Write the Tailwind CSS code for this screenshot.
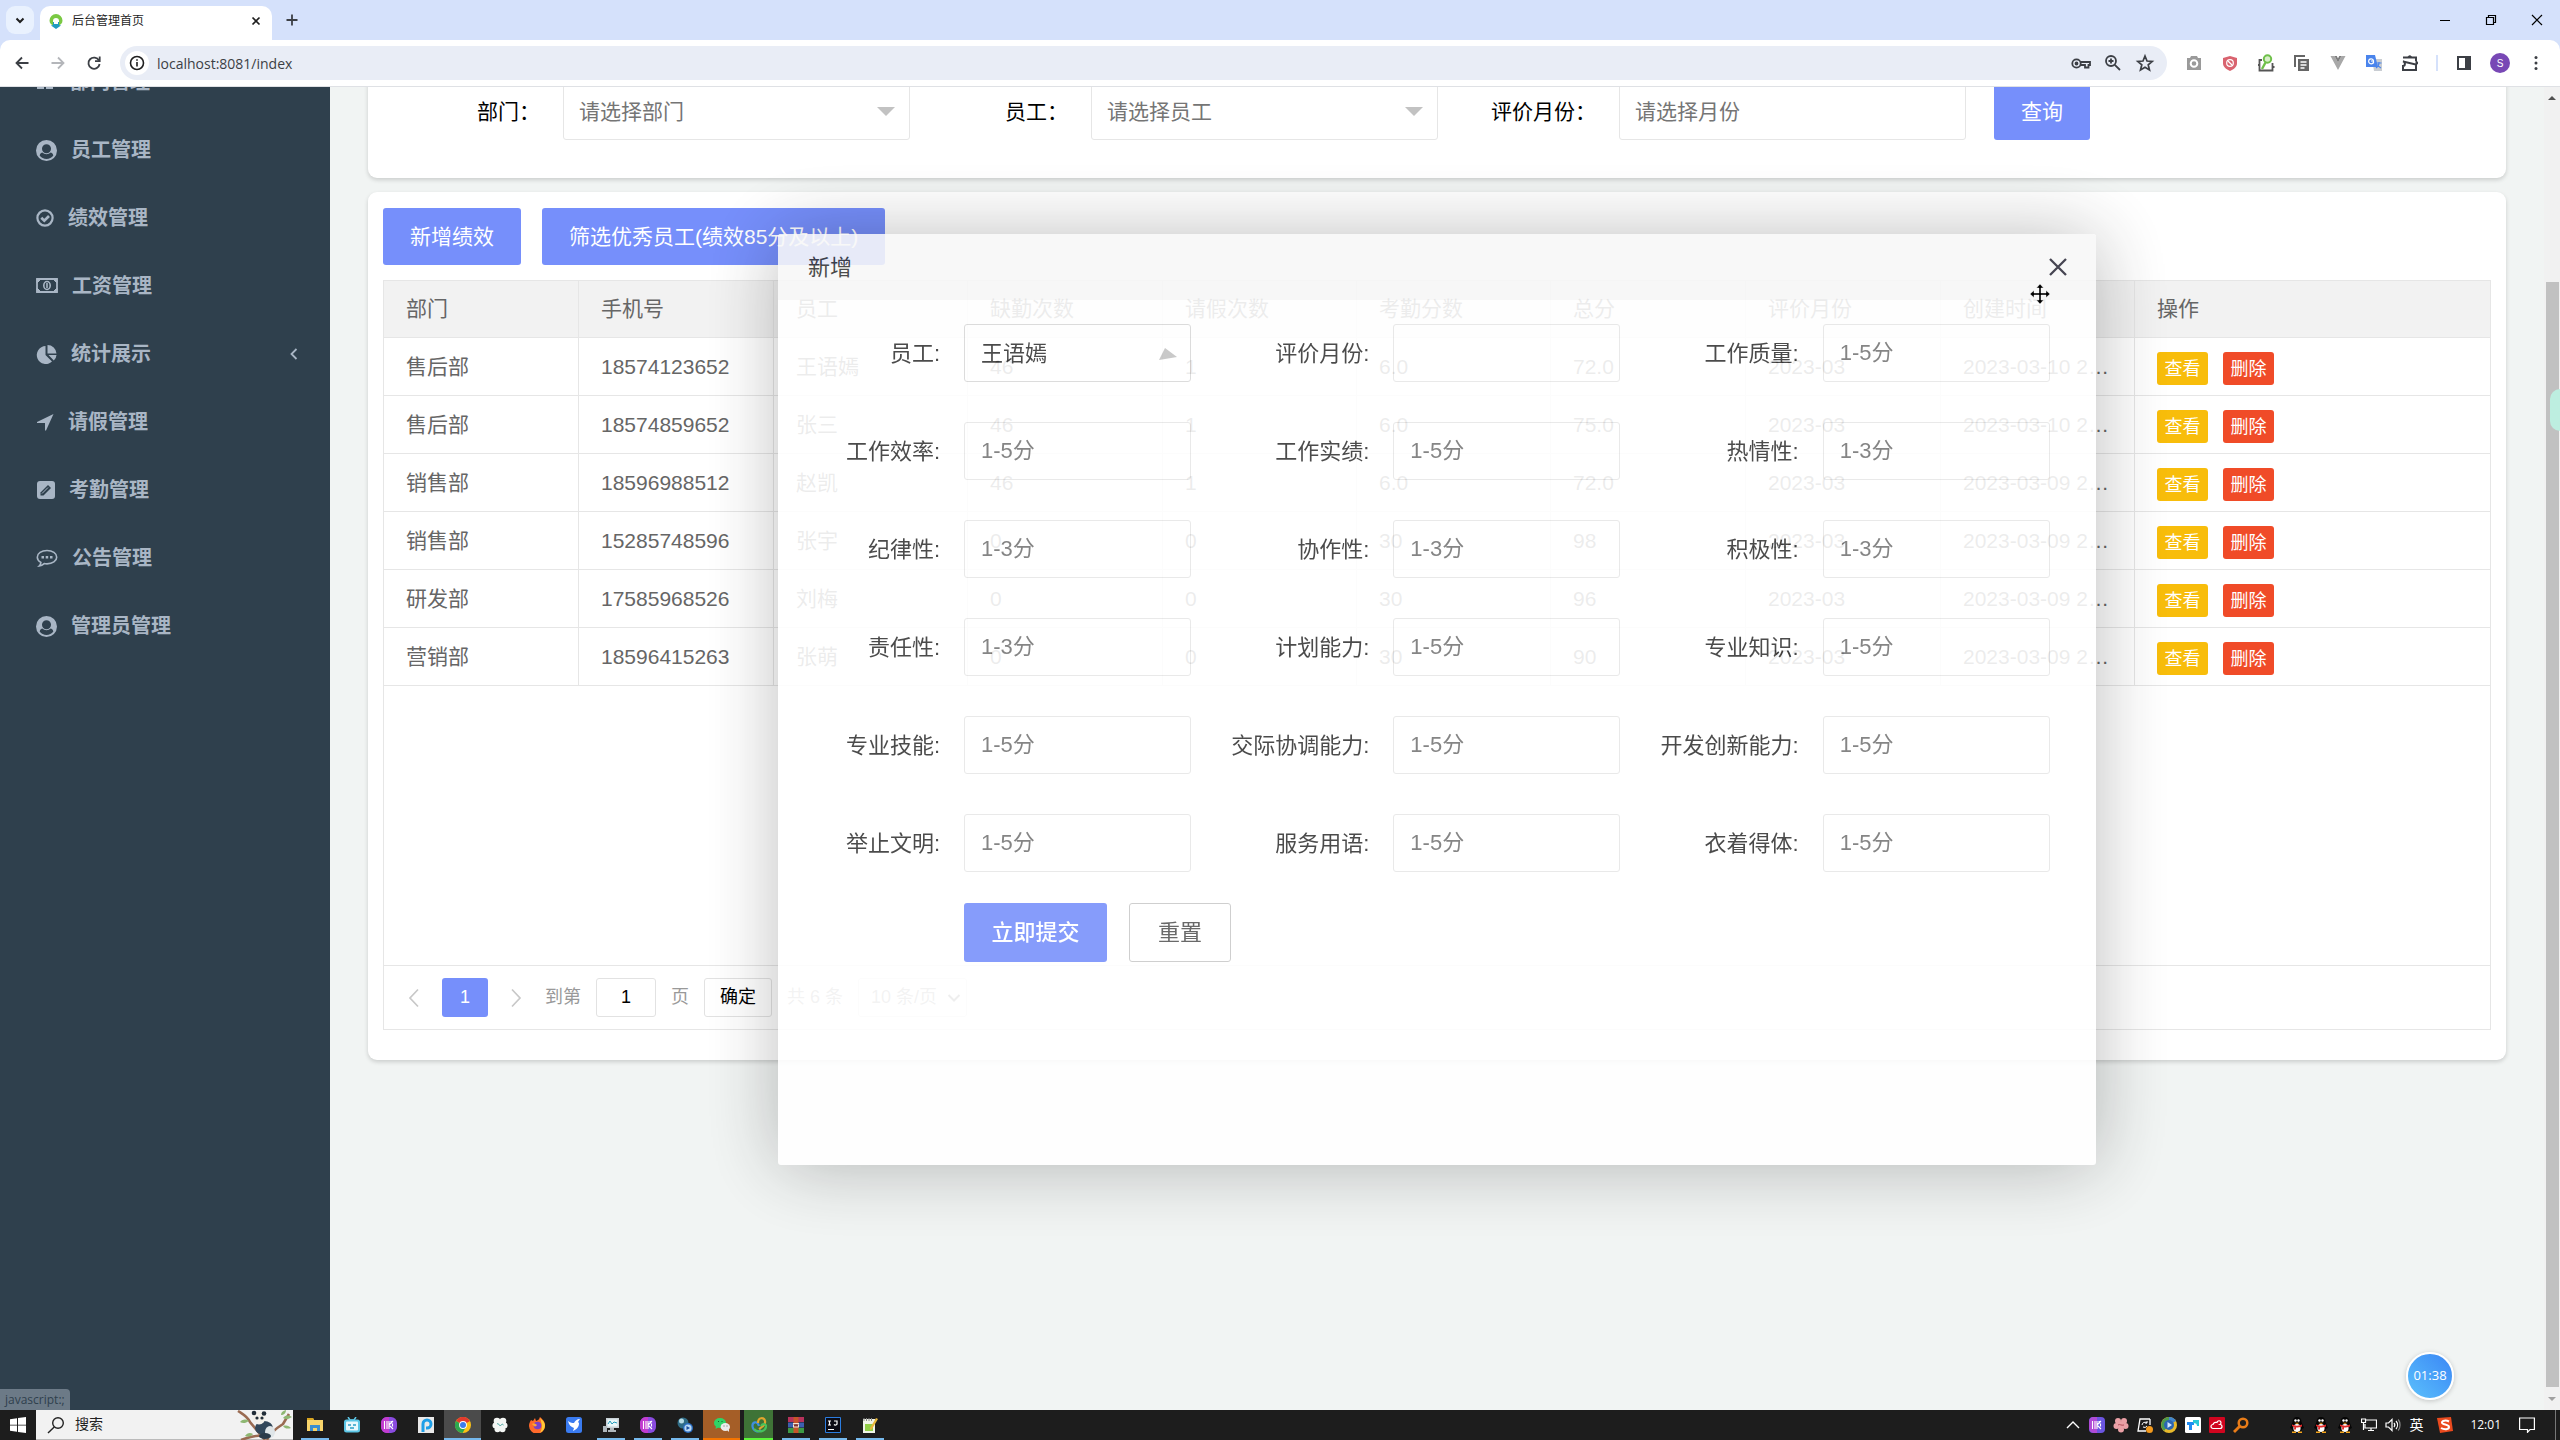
<!DOCTYPE html>
<html lang="zh-CN">
<head>
<meta charset="utf-8">
<title>后台管理首页</title>
<script src="https://cdn.jsdelivr.net/npm/@tailwindcss/browser@4"></script>
</head>
<body class="flex h-screen flex-col overflow-hidden bg-[#f1f4f3] font-['Liberation_Sans','Noto_Sans_CJK_SC',sans-serif] text-[21px] text-[#666]">

<!-- Browser chrome -->
<header class="shrink-0 bg-[#d5e1fb]">
  <div class="flex h-10 items-end pl-[6px]">
    <button class="mb-[6px] flex h-7 w-7 items-center justify-center rounded-[9px] bg-[#e9f1fe]" aria-label="搜索标签页">
      <svg class="h-3 w-3" viewBox="0 0 12 12" fill="none" stroke="#1f1f1f" stroke-width="2"><path d="M2.500 4.500 6 8l3.500-3.500"/></svg>
    </button>
    <div class="ml-[6px] flex h-[34px] w-[232px] items-center rounded-t-[10px] bg-white pr-[10px] pl-2 text-[12px] text-[#1f1f1f]">
      <svg class="mb-1 h-4 w-4 shrink-0" viewBox="0 0 16 16"><path d="M8 1a6.500 6.500 0 0 1 6.500 6.500c0 3-2 4-3.500 5V8a3 3 0 0 0-6 0v4.500c-1.500-1-3.500-2-3.500-5A6.500 6.500 0 0 1 8 1z" fill="#7ac943"/><path d="M5 9h6v3l2 .5L8 16l-5-3.500 2-.5z" fill="#1f9bc0"/><path d="M6 8h4v3H6z" fill="#fff"/></svg>
      <span class="mb-1 ml-2 grow">后台管理首页</span>
      <button class="mb-1" aria-label="关闭标签页"><svg class="h-3 w-3" viewBox="0 0 12 12" stroke="#1f1f1f" stroke-width="1.700"><path d="M2.500 2.500l7 7M9.500 2.500l-7 7"/></svg></button>
    </div>
    <button class="mb-[13px] ml-[13px]" aria-label="新标签页"><svg class="h-[14px] w-[14px]" viewBox="0 0 14 14" stroke="#3c3f45" stroke-width="1.800"><path d="M7 1.500v11M1.500 7h11"/></svg></button>
    <div class="mr-4 mb-[13px] ml-auto flex gap-8">
      <button aria-label="最小化"><svg class="h-[14px] w-[14px]" viewBox="0 0 14 14" stroke="#000" stroke-width="1"><path d="M2 7.500h10"/></svg></button>
      <button aria-label="还原"><svg class="h-[14px] w-[14px]" viewBox="0 0 14 14" fill="none" stroke="#000" stroke-width="1.200"><path d="M2.500 4.500h7v7h-7zM4.500 4.500v-2h7v7h-2"/></svg></button>
      <button aria-label="关闭"><svg class="h-[14px] w-[14px]" viewBox="0 0 14 14" stroke="#000" stroke-width="1.200"><path d="M2 2l10 10M12 2L2 12"/></svg></button>
    </div>
  </div>
  <div class="flex h-[47px] items-center rounded-t-[10px] border-b border-[#dfe1e5] bg-white pr-[14px] pl-[14px] text-[#3c3f45]">
    <div class="flex gap-5">
      <button aria-label="后退"><svg class="h-4 w-4" viewBox="0 0 16 16" fill="none" stroke="#3c3f45" stroke-width="1.800"><path d="M14.500 8H2.500M8 2.500 2.500 8 8 13.500"/></svg></button>
      <button aria-label="前进"><svg class="h-4 w-4" viewBox="0 0 16 16" fill="none" stroke="#b4b6ba" stroke-width="1.800"><path d="M1.500 8h12M8 2.500 13.500 8 8 13.500"/></svg></button>
      <button aria-label="重新加载"><svg class="h-4 w-4" viewBox="0 0 16 16" fill="none" stroke="#3c3f45" stroke-width="1.800"><path d="M13 5.500A5.600 5.600 0 1 0 13.600 9"/><path d="M13.700 1.500v4.700H9"/></svg></button>
    </div>
    <div class="ml-[18px] flex h-[34px] grow items-center rounded-full bg-[#e9edf6] pr-3 pl-[5px]">
      <span class="flex h-6 w-6 items-center justify-center rounded-full bg-white"><svg class="h-4 w-4" viewBox="0 0 16 16" fill="none" stroke="#1f1f1f" stroke-width="1.600"><circle cx="8" cy="8" r="6.500"/><path d="M8 7v4.500M8 4.200v1.600"/></svg></span>
      <input aria-label="地址" class="ml-2 grow bg-transparent font-['Open_Sans',sans-serif] text-[14px] text-[#3c3f45] outline-none" value="localhost:8081/index">
      <div class="flex gap-3">
        <svg class="h-5 w-5" viewBox="0 0 20 20" fill="none" stroke="#3c3f45" stroke-width="1.800"><circle cx="5.500" cy="10.500" r="4.200"/><circle cx="5.500" cy="10.500" r="1" /><path d="M9.500 9h9.500v3h-1.500v2.500H14V12H9.500"/></svg>
        <svg class="h-5 w-5" viewBox="0 0 20 20" fill="none" stroke="#3c3f45" stroke-width="1.800"><circle cx="8" cy="8" r="5"/><path d="M11.800 11.800 17 17M8 5.500v5M5.500 8h5"/></svg>
        <svg class="h-5 w-5" viewBox="0 0 20 20" fill="none" stroke="#3c3f45" stroke-width="1.700"><path d="M10 3l2 5 5.200.4-4 3.400 1.300 5.200L10 14.200 5.500 17l1.300-5.200-4-3.400L8 8z"/></svg>
      </div>
    </div>
    <div class="ml-[17px] flex items-center gap-4">
      <svg class="h-5 w-5" viewBox="0 0 20 20"><path d="M3 5h3l1-2h6l1 2h3v12H3z" fill="#9a9a9a"/><circle cx="10" cy="10.500" r="3.300" fill="none" stroke="#fff" stroke-width="2"/></svg>
      <svg class="h-5 w-5" viewBox="0 0 20 20"><path d="M10 3l7 2v5c0 4-3 6-7 8-4-2-7-4-7-8V5z" fill="#d9636f"/><circle cx="10" cy="10" r="3.300" fill="none" stroke="#fff" stroke-width="1.200"/><path d="M8 8l4 4" stroke="#fff" stroke-width="1.200"/></svg>
      <svg class="h-5 w-5" viewBox="0 0 20 20" fill="none"><path d="M6 7H3.500v10.500h13V10M16.500 14h2M2 12h2" stroke="#555" stroke-width="1.800"/><circle cx="11.500" cy="6" r="3.700" fill="#d7efc8" stroke="#6fc04a" stroke-width="2"/><path d="M9.500 9.500 6 16" stroke="#6fc04a" stroke-width="2.400"/></svg>
      <svg class="h-5 w-5" viewBox="0 0 20 20"><path d="M3 14V3h10" fill="none" stroke="#666" stroke-width="2"/><path d="M6 6h11v12H6z" fill="#666"/><path d="M8.500 9h6M8.500 12h6M8.500 15h4" stroke="#fff" stroke-width="1.400"/></svg>
      <svg class="h-5 w-5" viewBox="0 0 20 20"><path d="M2.500 3h4L10 9.500 13.500 3h4L10 17z" fill="#a8a8a8"/><path d="M6.500 3h2.300L10 5.500 11.200 3h2.300L10 9.500z" fill="#7d7d7d"/></svg>
      <svg class="h-5 w-5" viewBox="0 0 20 20"><path d="M8 6h10v12h-8z" fill="#c9cdd2"/><path d="M2 2h9l3 12H2z" fill="#4a84ec"/><path d="M9.500 7.500A2.500 2.500 0 1 0 9 10h.5V8H7" fill="none" stroke="#fff" stroke-width="1.200"/><path d="M12.500 10h5M15 9v1c0 3-1.500 4-3 5M13.500 11.500c1 2 2 3 3.500 3.500" fill="none" stroke="#4a84ec" stroke-width="1.200"/></svg>
      <svg class="h-5 w-5" viewBox="0 0 20 20" fill="none" stroke="#3c3f45" stroke-width="2"><path d="M3 4.500h13V8.300M16 11.500V17H3v-4c2.500 0 2.500-4.500 0-4.500z"/><path d="M8 4.500a1.500 1.500 0 0 1 3.500 0zM16 8.300a1.500 1.500 0 0 1 0 3.300z" fill="#3c3f45" stroke-width="1"/></svg>
      <span class="h-4 w-[2px] bg-[#d5e1fb]"></span>
      <svg class="h-5 w-5" viewBox="0 0 20 20"><path d="M4 4h12v12H4z" fill="none" stroke="#3c3f45" stroke-width="2"/><path d="M11 4h5v12h-5z" fill="#3c3f45"/></svg>
      <span class="flex h-5 w-5 items-center justify-center rounded-full bg-[#7848b5] text-[10px] text-white">S</span>
      <button aria-label="菜单"><svg class="h-5 w-5" viewBox="0 0 20 20" fill="#3c3f45"><circle cx="10" cy="4.500" r="1.500"/><circle cx="10" cy="10" r="1.500"/><circle cx="10" cy="15.500" r="1.500"/></svg></button>
    </div>
  </div>
</header>

<div class="relative flex min-h-0 grow">
  <!-- Side menu -->
  <aside class="w-[330px] shrink-0 overflow-hidden bg-[#2f404d]">
    <nav class="-mt-[39px] text-[20px] font-bold text-[#a9b6c5]">
      <a href="#" class="flex h-[68px] items-center gap-[14px] px-9"><svg class="h-5 w-5" viewBox="0 0 20 20" fill="currentColor"><path d="M1 8h7v9H1zM10 8h7v9h-7z"/></svg>部门管理</a>
      <a href="#" class="flex h-[68px] items-center gap-[14px] px-9"><svg class="h-[21px] w-[21px]" viewBox="0 0 20 20" fill="currentColor"><path fill-rule="evenodd" d="M10 0a10 10 0 1 1 0 20 10 10 0 0 1 0-20zM3.500 14.700A8 8 0 0 0 16.500 14.700C16 12.500 14.800 11.800 14 11.800a5.500 5.500 0 0 1-8 0c-.8 0-2 .7-2.500 2.900zM10 4a4.300 4.300 0 1 0 0 8.600A4.300 4.300 0 0 0 10 4z"/></svg>员工管理</a>
      <a href="#" class="flex h-[68px] items-center gap-[14px] px-9"><svg class="h-[18px] w-[18px]" viewBox="0 0 18 18" fill="none" stroke="currentColor"><circle cx="9" cy="9" r="7.600" stroke-width="2.200"/><path d="M5.300 8.700 8.300 11.600 13 7" stroke-width="2.700"/></svg>绩效管理</a>
      <a href="#" class="flex h-[68px] items-center gap-[14px] px-9"><svg class="h-[22px] w-[22px]" viewBox="0 0 22 22" fill="none" stroke="currentColor"><path d="M1 4h20v13H1z" stroke-width="1.800"/><path d="M1 4h4L1 8zM21 4v4l-4-4zM1 17v-4l4 4zM21 17h-4l4-4z" fill="currentColor"/><ellipse cx="11" cy="10.500" rx="3.200" ry="4" stroke-width="1.600"/><path d="M11 8v5" stroke-width="1.600"/></svg>工资管理</a>
      <a href="#" class="flex h-[68px] items-center gap-[14px] px-9"><svg class="h-[21px] w-[21px]" viewBox="0 0 21 21" fill="currentColor"><path d="M9.500 2v9l6.500 6.500A9 9 0 1 1 9.500 2z"/><path d="M11.500 1a9 9 0 0 1 9 8.500h-9zM12.500 11h8a8 8 0 0 1-2.700 5.500z"/></svg><span class="grow">统计展示</span>
        <svg class="-mr-[6px] h-3 w-3" viewBox="0 0 12 12" fill="none" stroke="currentColor" stroke-width="1.800"><path d="M8.500 1 3.500 6l5 5"/></svg></a>
      <a href="#" class="flex h-[68px] items-center gap-[14px] px-9"><svg class="h-[18px] w-[18px]" viewBox="0 0 18 18" fill="currentColor"><path d="M17.500 1 10 17.500H9V10H1V9z"/></svg>请假管理</a>
      <a href="#" class="flex h-[68px] items-center gap-[14px] px-9"><svg class="h-[19px] w-[19px]" viewBox="0 0 19 19"><rect x="1" y="0" width="18" height="18" rx="3" fill="currentColor"/><path d="M4.500 14.500v-3l7.500-7.500 3 3-7.500 7.500z" fill="#2f404d"/><path d="M6 12.500l6-6" stroke="#a9b6c5"/></svg>考勤管理</a>
      <a href="#" class="flex h-[68px] items-center gap-[14px] px-9"><svg class="h-[22px] w-[22px]" viewBox="0 0 22 22" fill="none" stroke="currentColor"><path d="M11 3.500c5.500 0 9.700 3 9.700 6.700s-4.200 6.700-9.700 6.700c-1 0-2 0-2.800-.3-1.500 1.400-3.200 2.200-5 2.400 1-1 1.600-2 1.700-3.600C2.700 14.200 1.300 12.300 1.300 10.200 1.300 6.500 5.500 3.500 11 3.500z" stroke-width="1.600"/><path d="M5.500 10.200h2.500M9.700 10.200h2.500M14 10.200h2.500" stroke-width="2.500"/></svg>公告管理</a>
      <a href="#" class="flex h-[68px] items-center gap-[14px] px-9"><svg class="h-[21px] w-[21px]" viewBox="0 0 20 20" fill="currentColor"><path fill-rule="evenodd" d="M10 0a10 10 0 1 1 0 20 10 10 0 0 1 0-20zM3.500 14.700A8 8 0 0 0 16.500 14.700C16 12.500 14.800 11.800 14 11.800a5.500 5.500 0 0 1-8 0c-.8 0-2 .7-2.500 2.900zM10 4a4.300 4.300 0 1 0 0 8.600A4.300 4.300 0 0 0 10 4z"/></svg>管理员管理</a>
    </nav>
  </aside>

  <main class="relative min-w-0 grow overflow-hidden px-[38px]">
    <!-- Filter card -->
    <section class="-mt-8 rounded-[9px] bg-white pt-7 pb-[38px] pl-[14px] shadow-[0_2px_4px_rgba(0,0,0,0.16)]">
      <form class="flex h-[57px] items-center">
        <label for="f-dept" class="w-[181px] shrink-0 pr-[23px] text-right text-black">部门：</label>
        <div class="relative">
          <select id="f-dept" class="h-[57px] w-[347px] appearance-none rounded-[3px] border border-[#e6e6e6] bg-white px-[15px] text-[#757575]"><option>请选择部门</option></select>
          <span class="pointer-events-none absolute top-6 right-[15px] border-x-[9px] border-t-[9px] border-x-transparent border-t-[#c2c2c2]"></span>
        </div>
        <label for="f-emp" class="w-[181px] shrink-0 pr-[23px] text-right text-black">员工：</label>
        <div class="relative">
          <select id="f-emp" class="h-[57px] w-[347px] appearance-none rounded-[3px] border border-[#e6e6e6] bg-white px-[15px] text-[#757575]"><option>请选择员工</option></select>
          <span class="pointer-events-none absolute top-6 right-[15px] border-x-[9px] border-t-[9px] border-x-transparent border-t-[#c2c2c2]"></span>
        </div>
        <label for="f-month" class="w-[181px] shrink-0 pr-[23px] text-right text-black">评价月份：</label>
        <input id="f-month" placeholder="请选择月份" class="h-[57px] w-[347px] rounded-[3px] border border-[#e6e6e6] bg-white px-[15px] placeholder:text-[#757575]">
        <button type="button" class="ml-7 h-[57px] rounded-[3px] bg-[#768ffb] px-[27px] text-white">查询</button>
      </form>
    </section>

    <!-- Performance table card -->
    <section class="mt-[14px] rounded-[9px] bg-white px-[15px] pt-4 pb-[30px] shadow-[0_2px_4px_rgba(0,0,0,0.16)]">
      <div class="flex gap-[21px]">
        <button class="h-[57px] rounded-[3px] bg-[#768ffb] px-[27px] text-white">新增绩效</button>
        <button class="h-[57px] rounded-[3px] bg-[#768ffb] px-[27px] text-white">筛选优秀员工(绩效85分及以上)</button>
      </div>
      <div class="mt-[15px] border border-[#e6e6e6]">
        <table class="w-full table-fixed border-separate border-spacing-0 text-left">
          <colgroup><col class="w-[195px]"><col class="w-[195px]"><col class="w-[194px]"><col class="w-[195px]"><col class="w-[194px]"><col class="w-[194px]"><col class="w-[195px]"><col class="w-[195px]"><col class="w-[194px]"><col></colgroup>
          <thead id="head" class="bg-[#f2f2f2]"></thead>
          <tbody id="rows"></tbody>
        </table>
        <div class="h-[279px]"></div>
        <div class="flex h-16 items-center border-t border-[#e6e6e6] pl-[18px] text-[18px] text-[#999]">
          <button class="flex w-6 justify-center" aria-label="上一页"><svg class="h-5 w-5" viewBox="0 0 20 20" fill="none" stroke="#c8c8c8" stroke-width="1.700"><path d="M14 1.500 6 10l8 8.500"/></svg></button>
          <button class="mx-[16px] h-[39px] w-[46px] rounded-[3px] bg-[#768ffb] text-white">1</button>
          <button class="flex w-6 justify-center" aria-label="下一页"><svg class="h-5 w-5" viewBox="0 0 20 20" fill="none" stroke="#c8c8c8" stroke-width="1.700"><path d="M6 1.500 14 10l-8 8.500"/></svg></button>
          <label for="page" class="ml-[17px]">到第</label>
          <input id="page" value="1" class="mx-[15px] h-[39px] w-[60px] rounded-[3px] border border-[#e2e2e2] text-center text-black">页
          <button class="mr-[15px] ml-[15px] h-[39px] w-[68px] rounded-[3px] border border-[#e2e2e2] bg-white text-black">确定</button>共 6 条
          <div class="relative ml-[15px]">
            <select aria-label="每页条数" class="h-[39px] w-[109px] appearance-none rounded-[3px] border border-[#e2e2e2] bg-white pl-3 text-[#999]"><option>10 条/页</option></select>
            <svg class="pointer-events-none absolute top-[13px] right-[6px] h-[14px] w-[14px]" viewBox="0 0 14 14" fill="none" stroke="#777" stroke-width="2"><path d="M1.500 4 7 9.500 12.500 4"/></svg>
          </div>
        </div>
      </div>
    </section>
  </main>

  <!-- Page scroll bar -->
  <div class="flex w-4 shrink-0 flex-col items-center bg-[#f1f1f1] pt-[7px] pb-[7px]">
    <svg class="h-2 w-2 shrink-0" viewBox="0 0 8 8"><path d="M0 6 4 2l4 4z" fill="#505050"/></svg>
    <span class="mt-[180px] mb-2 w-[13px] grow bg-[#c1c1c1]"></span>
    <svg class="h-2 w-2 shrink-0" viewBox="0 0 8 8"><path d="M0 2h8L4 6z" fill="#a0a0a0"/></svg>
  </div>

  <!-- Add dialog, fading in over the page -->
  <div role="dialog" aria-label="新增" class="absolute top-[147px] right-4 left-[330px] mx-auto w-[1318px] rounded-[3px] bg-white text-[22px] text-[#333] opacity-[0.88] shadow-[1px_1px_75px_rgba(0,0,0,0.3)]">
    <div class="flex h-[66px] items-center justify-between rounded-t-[3px] bg-[#f8f8f8] pr-7 pl-[30px]">
      <h2>新增</h2>
      <button aria-label="关闭"><svg class="h-5 w-5" viewBox="0 0 20 20" stroke="#2d2c3b" stroke-width="2.300"><path d="M2 2l16 16M18 2 2 18"/></svg></button>
    </div>
    <form class="px-4 pt-6 pb-[203px]">
      <div id="fields" class="grid grid-cols-3 gap-x-[2px] gap-y-10"></div>
      <div class="mt-[31px] flex gap-[22px] pl-[170px]">
        <button type="button" class="h-[59px] w-[143px] rounded-[3px] bg-[#768ffb] font-medium text-white">立即提交</button>
        <button type="reset" class="h-[59px] w-[102px] rounded-[3px] border border-[#c9c9c9] bg-white text-[#555]">重置</button>
      </div>
    </form>
  </div>

  <svg class="absolute top-[197px] right-[510px] h-5 w-5" viewBox="0 0 20 20"><path d="M10 0l3.500 4H11v5h5V6.500l4 3.500-4 3.500V11h-5v5h2.500L10 20l-3.500-4H9v-5H4v2.500L0 10l4-3.500V9h5V4H6.500z" fill="#000" stroke="#fff" stroke-width=".4"/></svg>

  <!-- Floating widgets -->
  <div class="absolute right-0 top-[302px] h-[42px] w-[10px] rounded-l-full bg-[#bdeee0]"></div>
  <div class="absolute right-[106px] bottom-[10px] flex h-12 w-12 items-center justify-center rounded-full border-2 border-white bg-linear-to-tr from-[#5cc0fb] to-[#3c86f5] font-['Open_Sans',sans-serif] text-[13px] text-white shadow-[0_1px_5px_rgba(0,0,0,0.2)]">01:38</div>
  <div class="absolute bottom-0 left-0 rounded-tr-[4px] bg-[#6c7a87] px-[5px] font-['Open_Sans',sans-serif] text-[12px] leading-[21px] text-[#2f404d]">javascript:;</div>
</div>

<!-- Taskbar -->
<footer class="flex h-[30px] shrink-0 bg-[#1d1d1d] text-white">
  <button class="flex w-9 items-center justify-center" aria-label="开始"><svg class="h-4 w-4" viewBox="0 0 16 16" fill="#fff"><path d="M0 2.300 7 1.300v6.400H0zM8 1.100 16 0v7.700H8zM0 8.500h7v6.300l-7-1zM8 8.500h8V16l-8-1.100z"/></svg></button>
  <div class="flex w-[257px] items-center border-b border-[#bbb] bg-[#f2f2f2] pl-[11px]">
    <svg class="h-[18px] w-[18px]" viewBox="0 0 18 18" fill="none" stroke="#222" stroke-width="1.400"><circle cx="11" cy="7" r="5.300"/><path d="M7.200 11 1 17"/></svg>
    <input aria-label="搜索" placeholder="搜索" class="ml-[10px] w-[120px] grow bg-transparent text-[14px] placeholder:text-[#222]">
    <svg class="h-[30px] w-14" viewBox="0 0 56 30"><path d="M1 1c6 4 9 5 12 11l15 18M30 30c3-7 8-11 16-16l6-10M4 30c8-3 14-5 20-4" fill="none" stroke="#9a6b52" stroke-width="2.600"/><path d="M3 12c3-3 6-3 9-1-3 2-6 3-9 1zM8 26c2-3 5-4 8-2-2 3-5 3-8 2zM46 8c3-3 5-3 9-1-3 2-6 3-9 1zM44 5c0-3 2-4 5-5 0 3-2 5-5 5zM46 16c4-1 6 0 8 2-3 1-6 1-8-2z" fill="#8fb873"/><ellipse cx="27" cy="18" rx="9" ry="7" fill="#32475a"/><circle cx="22" cy="8" r="6.500" fill="#f3f0ea"/><circle cx="17" cy="3" r="2.300" fill="#222d38"/><circle cx="27" cy="3.500" r="2.300" fill="#222d38"/><circle cx="20" cy="8" r="1.600" fill="#222d38"/><circle cx="25" cy="8" r="1.600" fill="#222d38"/><ellipse cx="33" cy="22" rx="5" ry="6" fill="#dfe5e8"/><ellipse cx="28" cy="26" rx="6" ry="3" fill="#2b3b4a"/></svg>
  </div>
  <div class="ml-[3px] flex">
    <span class="flex w-[37px] flex-col items-center justify-end"><svg class="mb-[5px] h-4 w-4" viewBox="0 0 16 16"><path d="M0 1h6l1 2h9v11H0z" fill="#f9d56b"/><path d="M0 1h6l1 2H0z" fill="#d9a520"/><path d="M3 14V8h10v6h-3v-3H6v3z" fill="#3c8fcf"/></svg><i class="h-[2px] w-7 bg-[#76b9ed]"></i></span>
    <span class="flex w-[37px] flex-col items-center justify-end"><svg class="mb-[5px] h-4 w-4" viewBox="0 0 16 16"><path d="M4 0l2 3h4l2-3" fill="none" stroke="#5cc6e6" stroke-width="1.500"/><rect y="2.500" width="16" height="13" rx="2.500" fill="#5cc6e6"/><rect x="2" y="4.500" width="12" height="9" rx="1" fill="#e8f8fd"/><path d="M4 8h3M9 8h3M6 11h4" stroke="#2d9fc6" stroke-width="1.300"/></svg><i class="h-[2px] w-7"></i></span>
    <span class="flex w-[37px] flex-col items-center justify-end"><svg class="mb-[5px] h-4 w-4" viewBox="0 0 16 16"><rect width="16" height="16" rx="6" fill="#8a4be0"/><path d="M0 10V6c0-3 3-6 6-6h2v16H6c-3 0-6-3-6-6z" fill="#c23ccf"/><path d="M3.500 4v8M6 4v8M8 4v8M8 8l4-4M8 8l4 4M10 4v3M11.500 6.500v3" stroke="#fff" stroke-width="1.100"/></svg><i class="h-[2px] w-7"></i></span>
    <span class="flex w-[37px] flex-col items-center justify-end"><svg class="mb-[5px] h-4 w-4" viewBox="0 0 16 16"><path d="M0 0h16v16H0z" fill="#e9e9e9"/><path d="M5 15V7a4 4 0 1 1 4 4H8" fill="none" stroke="#1e9fe8" stroke-width="3"/></svg><i class="h-[2px] w-7"></i></span>
    <span class="flex w-[37px] flex-col items-center justify-end bg-[#4b4b4b]"><svg class="mb-[5px] h-4 w-4" viewBox="0 0 16 16"><circle cx="8" cy="8" r="8" fill="#fbc116"/><path d="M8 8 1 4a8 8 0 0 1 14 0z" fill="#e33b2e"/><path d="M8 8 1 4a8 8 0 0 0 6.500 12L11 10z" fill="#2da94f"/><circle cx="8" cy="8" r="3.900" fill="#fff"/><circle cx="8" cy="8" r="3" fill="#3b7ded"/></svg><i class="h-[2px] w-full bg-[#76b9ed]"></i></span>
    <span class="flex w-[37px] flex-col items-center justify-end"><svg class="mb-[5px] h-4 w-4" viewBox="0 0 16 16" fill="#f4f6f4"><circle cx="5" cy="4" r="3.300"/><circle cx="11" cy="4" r="3.300"/><circle cx="3.500" cy="8.500" r="3"/><circle cx="12.500" cy="8.500" r="3"/><circle cx="5.500" cy="12.300" r="3"/><circle cx="10.500" cy="12.300" r="3"/><circle cx="8" cy="8" r="3.500"/><path d="M5 7c2-1.500 2 2.500 3.500 1.500S10 6.500 11.500 8" fill="none" stroke="#39a09a"/></svg><i class="h-[2px] w-7"></i></span>
    <span class="flex w-[37px] flex-col items-center justify-end"><svg class="mb-[5px] h-4 w-4" viewBox="0 0 16 16"><path d="M2 3l2 1 2-3 1 3c4-1 3-3 4-4 2 2 5 4 5 8.500A8 8 0 0 1 0 9c0-3 1-4 2-6z" fill="#ff6a2b"/><path d="M11 1c2 2 5 4 5 7.500 0 3-2 6-5 7 3-4 2-9 0-14.500z" fill="#ffcb35"/><circle cx="8.500" cy="8.500" r="3.800" fill="#7b42c9"/><path d="M3 7c2-1 4 0 5 1-1 2-3 2-5-1z" fill="#ffa532"/></svg><i class="h-[2px] w-7"></i></span>
    <span class="flex w-[37px] flex-col items-center justify-end"><svg class="mb-[5px] h-4 w-4" viewBox="0 0 16 16"><rect width="16" height="16" rx="2.500" fill="#3a7bf0"/><path d="M2 4c3 2 4 2 6 2 1-2 3-4 6-4l-2 3 1 1c0 4-2 6-6 8l1-3C5 10 3 8 2 4z" fill="#fff"/></svg><i class="h-[2px] w-7"></i></span>
    <span class="flex w-[37px] flex-col items-center justify-end"><svg class="mb-[5px] h-4 w-4" viewBox="0 0 16 16"><path d="M3 1h13v10H3z" fill="#c9d2d8"/><path d="M4.500 2.500h10v7h-10z" fill="#eaf8fb"/><path d="M5 7l2-3 2 3 2-2 3 1" fill="none" stroke="#259dbb"/><path d="M0 9h4v6H0zM7 11h4v2h2v2H5v-2h2z" fill="#b0b8bd"/></svg><i class="h-[2px] w-7 bg-[#76b9ed]"></i></span>
    <span class="flex w-[37px] flex-col items-center justify-end"><svg class="mb-[5px] h-4 w-4" viewBox="0 0 16 16"><rect width="16" height="16" rx="6" fill="#8a4be0"/><path d="M0 10V6c0-3 3-6 6-6h2v16H6c-3 0-6-3-6-6z" fill="#c23ccf"/><path d="M3.500 4v8M6 4v8M8 4v8M8 8l4-4M8 8l4 4M10 4v3M11.500 6.500v3" stroke="#fff" stroke-width="1.100"/></svg><i class="h-[2px] w-7 bg-[#76b9ed]"></i></span>
    <span class="flex w-[37px] flex-col items-center justify-end"><svg class="mb-[5px] h-4 w-4" viewBox="0 0 16 16"><circle cx="6" cy="6" r="5.500" fill="#2f6c86"/><circle cx="4.500" cy="4" r="2.500" fill="#b7dbe6"/><circle cx="11" cy="11" r="5" fill="#2c6fc3"/><circle cx="11" cy="11" r="3.600" fill="#b8d8f5"/><path d="M9.500 9v4l3.500-2z" fill="#1a4fa0"/></svg><i class="h-[2px] w-7 bg-[#76b9ed]"></i></span>
    <span class="flex w-[37px] flex-col items-center justify-end bg-[#a55e27]"><svg class="mb-[5px] h-4 w-4" viewBox="0 0 16 16"><ellipse cx="6" cy="6" rx="6" ry="5" fill="#2fd566"/><path d="M2 9l-.5 3L5 10z" fill="#2fd566"/><ellipse cx="11.300" cy="10" rx="4.700" ry="4" fill="#ececec"/><path d="M13 13l2 2v-3z" fill="#ececec"/><path d="M4 4.500h1M7.500 4.500h1" stroke="#14622c" stroke-width="1.200"/><path d="M9.500 9h1M12.500 9h1" stroke="#666"/></svg><i class="h-[2px] w-full bg-[#f57400]"></i></span>
    <span class="flex w-[37px] flex-col items-center justify-end bg-[#3e7336] bg-clip-content px-1"><svg class="mb-[5px] h-4 w-4" viewBox="0 0 16 16" fill="none" stroke-width="2.200"><path d="M8 9C6 3 1 5 1.500 9.500 2 14 7 16 10 13" stroke="#3f8ee0"/><path d="M7 6c0-6 6-6 7-2s-3 6-6 8" stroke="#e2a52e"/><path d="M3 12c4 4 11 3 12-2 .5-3-3-4-5-1" stroke="#46c35b"/></svg><i class="h-[2px] w-full bg-[#5df53a]"></i></span>
    <span class="flex w-[37px] flex-col items-center justify-end"><svg class="mb-[5px] h-4 w-4" viewBox="0 0 16 16"><path d="M0 0h16v5H0z" fill="#b8325c"/><path d="M0 5.500h16v5H0z" fill="#3d5fb0"/><path d="M0 11h16v5H0z" fill="#3d9a45"/><path d="M5.500 0h5v16h-5z" fill="#c8552a"/><path d="M5 6h6v4.500H5z" fill="#f5e6d2"/><path d="M6 7l1 2.500L8 7l1 2.500L10 7" fill="none" stroke="#7a2323"/></svg><i class="h-[2px] w-7 bg-[#76b9ed]"></i></span>
    <span class="flex w-[37px] flex-col items-center justify-end"><svg class="mb-[5px] h-4 w-4" viewBox="0 0 16 16"><path d="M.5.500h15v15H.5z" fill="#0b0b14" stroke="#2b7de0"/><path d="M3 4h3M4.500 4v4M3 8h3M9 4h3v3c0 1-2 1.500-3 .5M3 12.500h6" fill="none" stroke="#fff" stroke-width="1.200"/></svg><i class="h-[2px] w-7 bg-[#76b9ed]"></i></span>
    <span class="flex w-[37px] flex-col items-center justify-end"><svg class="mb-[5px] h-4 w-4" viewBox="0 0 16 16"><path d="M1 2h12v14H1z" fill="#f1f5e8"/><path d="M3 7h8v7H3z" fill="#92cf47"/><path d="M2 1v3M4.500 1v3M7 1v3M9.500 1v3" stroke="#888"/><path d="M8 11l6-10 2 1-6 10-2 1z" fill="#e9b83c"/></svg><i class="h-[2px] w-7 bg-[#76b9ed]"></i></span>
  </div>
  <div class="ml-auto flex items-center gap-2 pr-1">
    <svg class="h-4 w-4" viewBox="0 0 16 16" fill="none" stroke="#fff" stroke-width="1.400"><path d="M2 11 8 5l6 6"/></svg>
    <svg class="h-4 w-4" viewBox="0 0 16 16"><rect width="16" height="16" rx="4" fill="#6b55e0"/><path d="M0 9V5c0-3 2-5 5-5h3v16H5c-3 0-5-3-5-5z" fill="#b04bd6"/><path d="M3.500 4v8M6 4v8M8 4v8M8 8l4-4M8 8l4 4M10 4v3M11.500 6.500v3" stroke="#fff" stroke-width="1.100"/></svg>
    <svg class="h-4 w-4" viewBox="0 0 16 16" fill="#eba0a6"><circle cx="5" cy="4" r="3"/><circle cx="11" cy="4" r="3"/><circle cx="3.500" cy="9" r="3"/><circle cx="12.500" cy="9" r="3"/><circle cx="8" cy="12.500" r="3"/><circle cx="8" cy="8" r="3.500"/><path d="M5 8c2-1.500 3 1 6 0" stroke="#b14d5a" fill="none"/></svg>
    <svg class="h-4 w-4" viewBox="0 0 16 16" fill="none"><path d="M13 2H3L1 14h8M13 2v6" stroke="#fff" stroke-width="1.300"/><path d="M5 8a3 3 0 0 1 5-2M10 4v2H8M10 9a3 3 0 0 1-4 1" stroke="#fff"/><circle cx="12.500" cy="12.500" r="3.500" fill="#f39a1d"/></svg>
    <svg class="h-4 w-4" viewBox="0 0 16 16"><circle cx="8" cy="8" r="8" fill="#e8ba2c"/><path d="M8 0a8 8 0 0 0-5 14L8 8z" fill="#4a9a4f"/><path d="M8 0a8 8 0 0 1 7 4L8 8z" fill="#3f85cf"/><circle cx="8" cy="8" r="5" fill="#2b65b4"/><path d="M6.500 5v6l4.500-3z" fill="#cfe6ff"/></svg>
    <svg class="h-4 w-4" viewBox="0 0 16 16"><rect width="16" height="16" rx="1.500" fill="#fff"/><path d="M2 5h7v3H7v5H4V8H2z" fill="#1e8bf2"/><path d="M8 3h6v6h-2c0-2-1-3-4-3z" fill="#27c8d8"/></svg>
    <svg class="h-4 w-4" viewBox="0 0 16 16"><rect width="16" height="16" rx="1" fill="#d1051f"/><path d="M4 11.500a2 2 0 0 1 0-4 3 3 0 0 1 4-2 2 2 0 1 1 3 2 2 2 0 0 1 0 4z" fill="none" stroke="#fff" stroke-width="1.200"/></svg>
    <svg class="h-4 w-4" viewBox="0 0 16 16" fill="none" stroke="#e87c18"><circle cx="10" cy="6" r="4.300" stroke-width="2.500"/><path d="M7 9 1 15" stroke-width="2.800"/></svg>
    <span class="w-4"></span><span class="-mr-2 w-2"></span>
    <svg class="h-4 w-4" viewBox="0 0 16 16"><path d="M8 0c3 0 4.500 2 4.500 5L15 11l-2 1-1 3H4l-1-3-2-1 2.500-6C3.500 2 5 0 8 0z" fill="#050505"/><ellipse cx="8" cy="11" rx="3.600" ry="4" fill="#fff"/><path d="M3 7.500c3 1.500 7 1.500 10 0v2c-2 .8-4 1-6 1v2H5l.3-2.300L3 9z" fill="#e02a2a"/><circle cx="6.500" cy="3.500" r="1.200" fill="#fff"/><circle cx="9.500" cy="3.500" r="1.200" fill="#fff"/><path d="M5.500 5.800h5L8 7zM3 14.500h4v1.500H3zM9 14.500h4v1.500H9z" fill="#f6a51c"/></svg>
    <svg class="h-4 w-4" viewBox="0 0 16 16"><path d="M8 0c3 0 4.500 2 4.500 5L15 11l-2 1-1 3H4l-1-3-2-1 2.500-6C3.500 2 5 0 8 0z" fill="#050505"/><ellipse cx="8" cy="11" rx="3.600" ry="4" fill="#fff"/><path d="M3 7.500c3 1.500 7 1.500 10 0v2c-2 .8-4 1-6 1v2H5l.3-2.300L3 9z" fill="#e02a2a"/><circle cx="6.500" cy="3.500" r="1.200" fill="#fff"/><circle cx="9.500" cy="3.500" r="1.200" fill="#fff"/><path d="M5.500 5.800h5L8 7zM3 14.500h4v1.500H3zM9 14.500h4v1.500H9z" fill="#f6a51c"/></svg>
    <svg class="h-4 w-4" viewBox="0 0 16 16"><path d="M8 0c3 0 4.500 2 4.500 5L15 11l-2 1-1 3H4l-1-3-2-1 2.500-6C3.500 2 5 0 8 0z" fill="#050505"/><ellipse cx="8" cy="11" rx="3.600" ry="4" fill="#fff"/><path d="M3 7.500c3 1.500 7 1.500 10 0v2c-2 .8-4 1-6 1v2H5l.3-2.300L3 9z" fill="#e02a2a"/><circle cx="6.500" cy="3.500" r="1.200" fill="#fff"/><circle cx="9.500" cy="3.500" r="1.200" fill="#fff"/><path d="M5.500 5.800h5L8 7zM3 14.500h4v1.500H3zM9 14.500h4v1.500H9z" fill="#f6a51c"/></svg>
    <svg class="h-4 w-4" viewBox="0 0 16 16" fill="none" stroke="#fff" stroke-width="1.200"><path d="M5 3h10.500v8H4V7M7 13.500h6M10 11v2.500M.5 2h4v3.500h-4zM2.500 5.500V13"/></svg>
    <svg class="h-4 w-4" viewBox="0 0 16 16" fill="none" stroke="#fff" stroke-width="1.200"><path d="M1 6h2.500L7 2.500v11L3.500 10H1zM9 6c1 1.200 1 2.800 0 4M11 4c2 2.300 2 5.700 0 8"/><path d="M13.200 2.500c2.500 3 2.500 8 0 11" stroke="#888"/></svg>
    <span class="text-[14px]">英</span>
    <svg class="ml-[6px] h-4 w-4" viewBox="0 0 16 16"><path d="M0 1l14-1 2 14-13 2z" fill="#ea4a1e"/><path d="M12 4.500C9 3 5 3.500 5 5.500c0 2.500 7 1.500 7 4.500 0 2.500-4.500 3-8 1" fill="none" stroke="#fff" stroke-width="2"/></svg>
    <time class="ml-[9px] font-['Open_Sans',sans-serif] text-[12px]">12:01</time>
    <svg class="ml-[10px] h-4 w-4" viewBox="0 0 16 16" fill="none" stroke="#fff" stroke-width="1.200"><path d="M.6 1h14.800v11.500H11L8.500 15.300V12.500H.6z"/></svg>
    <span class="ml-3 h-[30px] w-px bg-[#777]"></span>
  </div>
</footer>

<script>
  const columns = ['部门', '手机号', '员工', '缺勤次数', '请假次数', '考勤分数', '总分', '评价月份', '创建时间', '操作'];
  const records = [
    ['售后部', '18574123652', '王语嫣', '46', '1', '6.0', '72.0', '2023-03', '2023-03-10 20:11:32'],
    ['售后部', '18574859652', '张三', '46', '1', '6.0', '75.0', '2023-03', '2023-03-10 20:11:02'],
    ['销售部', '18596988512', '赵凯', '46', '1', '6.0', '72.0', '2023-03', '2023-03-09 21:42:15'],
    ['销售部', '15285748596', '张宇', '0', '0', '30', '98', '2023-03', '2023-03-09 21:40:51'],
    ['研发部', '17585968526', '刘梅', '0', '0', '30', '96', '2023-03', '2023-03-09 21:38:20'],
    ['营销部', '18596415263', '张萌', '0', '0', '30', '90', '2023-03', '2023-03-09 21:36:44']
  ];
  document.getElementById('head').innerHTML = '<tr>' + columns.map(c =>
    `<th class="h-[57px] border-r border-b border-[#e6e6e6] px-[22px] font-normal last:border-r-0">${c}</th>`).join('') + '</tr>';
  document.getElementById('rows').innerHTML = records.map(r => '<tr>' + r.map(v =>
    `<td class="h-[58px] truncate border-r border-b border-[#e6e6e6] px-[22px]">${v}</td>`).join('') +
    `<td class="h-[58px] border-b border-[#e6e6e6] px-[22px]"><div class="flex gap-[15px] pt-1">
      <button class="h-[33px] w-[51px] rounded-[3px] bg-[#f8bd0b] text-[18px] leading-[30px] text-white">查看</button>
      <button class="h-[33px] w-[51px] rounded-[3px] bg-[#f04b28] text-[18px] leading-[30px] text-white">删除</button></div></td></tr>`).join('');

  const fields = [
    ['员工'], ['评价月份', ''], ['工作质量', '1-5分'],
    ['工作效率', '1-5分'], ['工作实绩', '1-5分'], ['热情性', '1-3分'],
    ['纪律性', '1-3分'], ['协作性', '1-3分'], ['积极性', '1-3分'],
    ['责任性', '1-3分'], ['计划能力', '1-5分'], ['专业知识', '1-5分'],
    ['专业技能', '1-5分'], ['交际协调能力', '1-5分'], ['开发创新能力', '1-5分'],
    ['举止文明', '1-5分'], ['服务用语', '1-5分'], ['衣着得体', '1-5分']
  ];
  document.getElementById('fields').innerHTML = fields.map(([label, hint], i) => {
    const control = hint === undefined
      ? `<div class="relative"><select id="s${i}" class="h-[58px] w-[227px] appearance-none rounded-[3px] border border-[#d8d8d8] bg-white px-4"><option>王语嫣</option></select>
         <svg class="pointer-events-none absolute top-6 right-[14px] h-3 w-[18px]" viewBox="0 0 18 12"><path d="M0 12 6 0l12 9z" fill="#c2c2c2"/></svg></div>`
      : `<input id="s${i}" placeholder="${hint}" class="h-[58px] w-[227px] rounded-[3px] border border-[#e6e6e6] bg-white px-4 placeholder:text-[#757575]">`;
    return `<div class="flex items-center"><label for="s${i}" class="w-[170px] shrink-0 pr-6 text-right">${label}:</label>${control}</div>`;
  }).join('');
</script>
</body>
</html>
